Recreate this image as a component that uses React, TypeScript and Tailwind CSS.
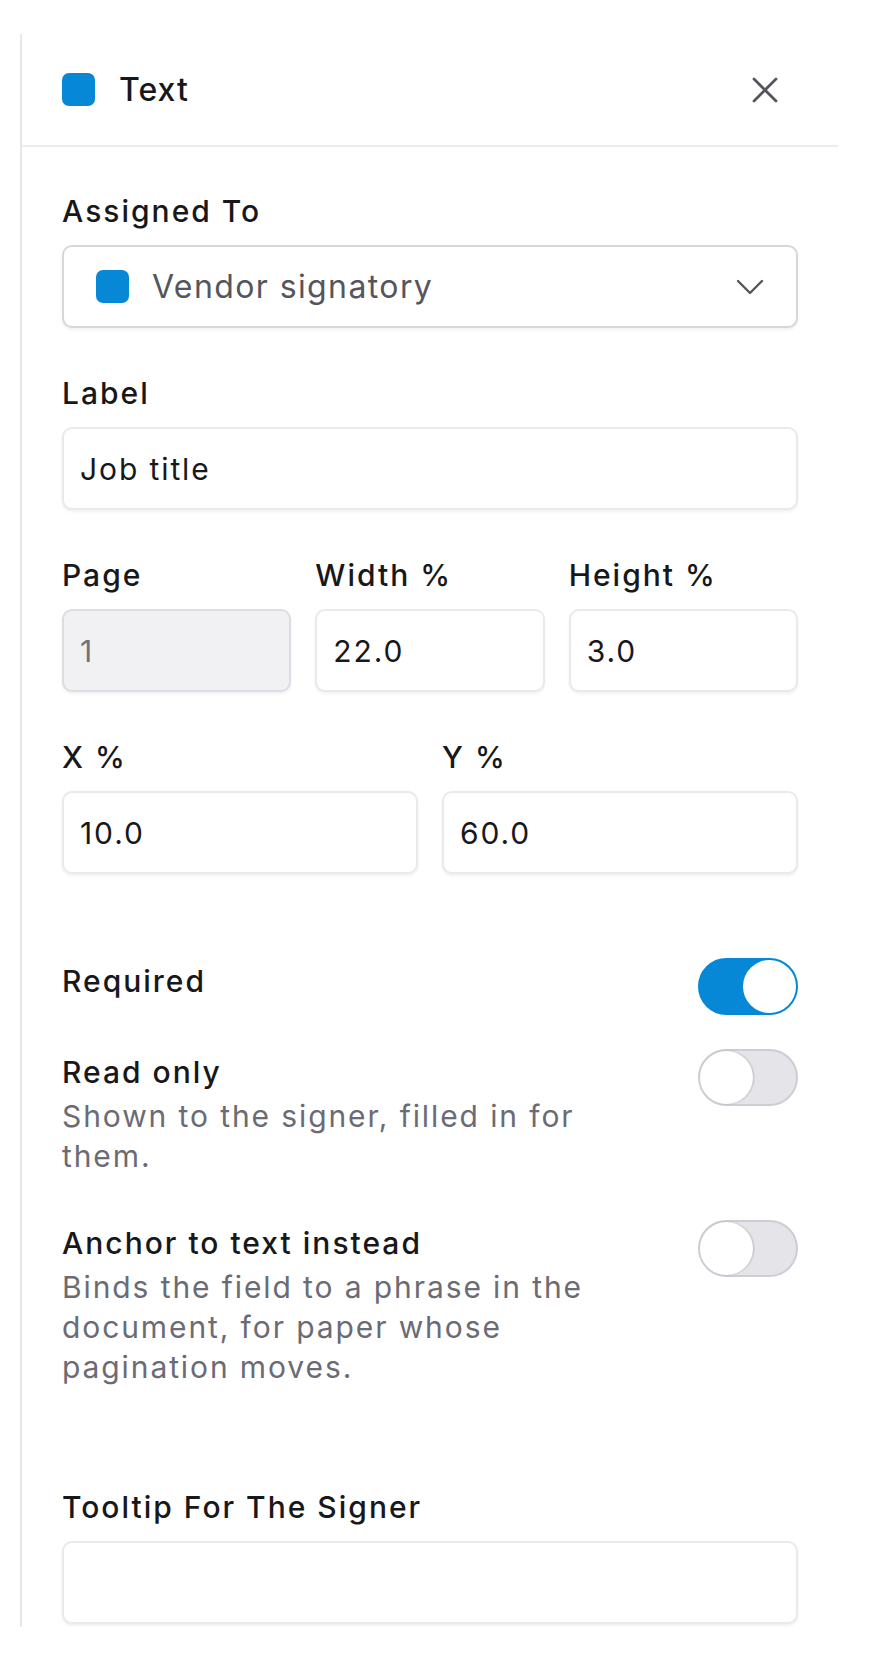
import React, { useState } from 'react';

interface ToggleProps {
  checked: boolean;
  onChange: (v: boolean) => void;
}

function Toggle({ checked, onChange }: ToggleProps) {
  return (
    <button
      type="button"
      role="switch"
      aria-checked={checked}
      onClick={() => onChange(!checked)}
      className={`shrink-0 w-[100px] h-[57px] rounded-full border-2 flex items-center ${
        checked ? 'bg-[#0788d6] border-[#0788d6] justify-end' : 'bg-[#e4e4e9] border-[#cdcdd5] justify-start'
      }`}
    >
      <span
        className={`block w-[53px] h-[53px] rounded-full bg-white ${
          checked ? '' : 'shadow-[1px_0_2px_rgba(0,0,0,0.18)]'
        }`}
      />
    </button>
  );
}

function FieldLabel({ children }: { children: React.ReactNode }) {
  return (
    <label className="block text-[30px] leading-[40px] font-medium tracking-[2px] text-[#18181b]">{children}</label>
  );
}

function TextInput({ value, disabled }: { value: string; disabled?: boolean }) {
  return (
    <input
      defaultValue={value}
      disabled={disabled}
      className={`mt-[14px] block w-full h-[83px] rounded-[10px] border-2 px-[16px] text-[30px] tracking-[1.9px] outline-none shadow-[0_2px_3px_rgba(0,0,0,0.06)] ${
        disabled
          ? 'bg-[#f1f1f4] border-[#dcdce2] text-[#71717a]'
          : 'bg-white border-[#e9e9ee] text-[#18181b]'
      }`}
    />
  );
}

function ToggleRow({
  title,
  description,
  checked,
  onChange,
}: {
  title: string;
  description?: string;
  checked: boolean;
  onChange: (v: boolean) => void;
}) {
  return (
    <div className="flex items-start justify-between gap-[24px]">
      <div className="w-[560px] pt-[3px]">
        <div className="text-[30px] leading-[40px] font-medium tracking-[2px] text-[#18181b]">{title}</div>
        {description && (
          <p className="mt-[4px] text-[30px] leading-[40px] tracking-[1.9px] text-[#6b6b75]">{description}</p>
        )}
      </div>
      <Toggle checked={checked} onChange={onChange} />
    </div>
  );
}

export default function App() {
  const [required, setRequired] = useState(true);
  const [readOnly, setReadOnly] = useState(false);
  const [anchored, setAnchored] = useState(false);

  return (
    <div className="min-h-screen bg-white pt-[34px] pl-[20px] font-['Inter',sans-serif] text-[#18181b] antialiased">
      <aside className="w-[818px] h-[1593px] border-l-2 border-[#e7e7ec] flex flex-col overflow-hidden bg-white">
        {/* Panel header */}
        <header className="h-[113px] shrink-0 flex items-center justify-between pl-[40px] pr-[49px] border-b-2 border-[#ececf0]">
          <div className="flex items-center gap-[24px]">
            <span className="w-[33px] h-[33px] rounded-[7px] bg-[#0788d6]" />
            <span className="text-[32px] font-medium tracking-[1px]">Text</span>
          </div>
          <button type="button" className="w-[48px] h-[48px] flex items-center justify-center text-[#55555e]">
            <svg width="26" height="26" viewBox="0 0 26 26" fill="none" stroke="currentColor" strokeWidth="2.8" strokeLinecap="round">
              <path d="M2 2 24 24M24 2 2 24" />
            </svg>
          </button>
        </header>

        {/* Field settings */}
        <div className="px-[40px] pt-[44px]">
          <div>
            <FieldLabel>Assigned To</FieldLabel>
            <button
              type="button"
              className="mt-[14px] w-full h-[83px] rounded-[10px] border-2 border-[#d6d6dd] bg-white flex items-center pl-[32px] pr-[32px] shadow-[0_2px_3px_rgba(0,0,0,0.06)]"
            >
              <span className="w-[33px] h-[33px] rounded-[7px] bg-[#0788d6] shrink-0" />
              <span className="ml-[23px] flex-1 text-left text-[32px] tracking-[1.4px] text-[#55555e]">Vendor signatory</span>
              <svg width="28" height="16" viewBox="0 0 28 16" fill="none" stroke="#55555e" strokeWidth="2.4" strokeLinecap="round" strokeLinejoin="round">
                <path d="M2 2 14 14 26 2" />
              </svg>
            </button>
          </div>

          <div className="mt-[45px]">
            <FieldLabel>Label</FieldLabel>
            <TextInput value="Job title" />
          </div>

          <div className="mt-[45px] grid grid-cols-3 gap-[24px]">
            <div>
              <FieldLabel>Page</FieldLabel>
              <TextInput value="1" disabled />
            </div>
            <div>
              <FieldLabel>Width %</FieldLabel>
              <TextInput value="22.0" />
            </div>
            <div>
              <FieldLabel>Height %</FieldLabel>
              <TextInput value="3.0" />
            </div>
          </div>

          <div className="mt-[45px] grid grid-cols-2 gap-[24px]">
            <div>
              <FieldLabel>X %</FieldLabel>
              <TextInput value="10.0" />
            </div>
            <div>
              <FieldLabel>Y %</FieldLabel>
              <TextInput value="60.0" />
            </div>
          </div>

          {/* Behaviour switches */}
          <div className="mt-[84px]">
            <ToggleRow title="Required" checked={required} onChange={setRequired} />
          </div>
          <div className="mt-[34px]">
            <ToggleRow
              title="Read only"
              description="Shown to the signer, filled in for them."
              checked={readOnly}
              onChange={setReadOnly}
            />
          </div>
          <div className="mt-[44px]">
            <ToggleRow
              title="Anchor to text instead"
              description="Binds the field to a phrase in the document, for paper whose pagination moves."
              checked={anchored}
              onChange={setAnchored}
            />
          </div>

          <div className="mt-[100px]">
            <FieldLabel>Tooltip For The Signer</FieldLabel>
            <TextInput value="" />
          </div>
        </div>
      </aside>
    </div>
  );
}
